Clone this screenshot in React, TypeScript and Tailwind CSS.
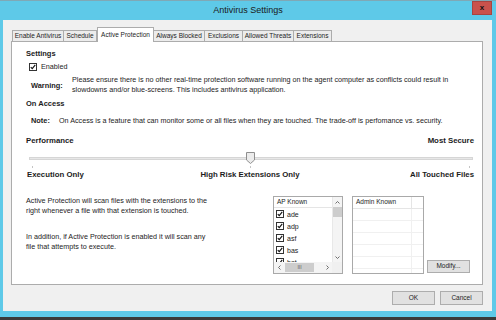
import React from "react";

const Check = () => (
  <span className="flex h-[8px] w-[8px] shrink-0 items-center justify-center border border-[#333] bg-white">
    <svg viewBox="0 0 8 8" className="h-[6px] w-[6px]">
      <path d="M1 4.2 L3 6.2 L7 1.2" fill="none" stroke="#111" strokeWidth="1.5" />
    </svg>
  </span>
);

const Chevron = ({ dir }: { dir: "up" | "down" | "left" | "right" }) => {
  const d = {
    up: "M1.5 4.5 L3.5 2.5 L5.5 4.5",
    down: "M1.5 2.5 L3.5 4.5 L5.5 2.5",
    left: "M4.5 1.5 L2.5 3.5 L4.5 5.5",
    right: "M2.5 1.5 L4.5 3.5 L2.5 5.5",
  }[dir];
  return (
    <svg viewBox="0 0 7 7" className="h-[7px] w-[7px]">
      <path d={d} fill="none" stroke="#606060" strokeWidth="0.9" />
    </svg>
  );
};

const tabs: [string, string][] = [
  ["Enable Antivirus", "w-[52px]"],
  ["Schedule", "w-[33px]"],
  ["Active Protection", "w-[57px]"],
  ["Always Blocked", "w-[51px]"],
  ["Exclusions", "w-[38px]"],
  ["Allowed Threats", "w-[51px]"],
  ["Extensions", "w-[38px]"],
];

const extensions = ["ade", "adp", "asf", "bas", "bat"];

export default function App() {
  return (
    <div className="flex h-[320px] w-[496px] flex-col overflow-hidden bg-[#5ec9e8] font-['Liberation_Sans',Arial,sans-serif] text-[#1c1c1c]">
      {/* top edge */}
      <div className="h-px bg-[#7fa8b6]" />

      {/* Title bar */}
      <div className="relative flex h-[19px] items-center justify-center">
        <span className="text-[9px] leading-none text-[#1a1a1a]">Antivirus Settings</span>
        <div className="absolute right-[4px] top-0 flex h-[14px] w-[20px] items-center justify-center border border-[#a94440] bg-[#c9524c]">
          <span className="text-[8px] font-bold leading-none text-[#111]">x</span>
        </div>
      </div>

      {/* Window body */}
      <div className="ml-[3px] mr-[4px] flex h-[291px] flex-col bg-[#f0f0f0]">
        {/* Tab strip */}
        <div className="flex items-end pl-[9px] pt-[7px]">
          {tabs.map(([label, w]) =>
            label === "Active Protection" ? (
              <div
                key={label}
                className={`relative z-10 -mb-px flex h-[15px] ${w} items-center justify-center border border-b-0 border-[#acacac] bg-white`}
              >
                <span className="text-[6.5px] leading-none">{label}</span>
              </div>
            ) : (
              <div
                key={label}
                className={`flex h-[11px] ${w} items-center justify-center border border-b-0 border-l-0 border-[#acacac] bg-[#ececec] first:border-l`}
              >
                <span className="text-[6.5px] leading-none">{label}</span>
              </div>
            )
          )}
        </div>

        {/* Panel */}
        <div className="ml-[8px] flex h-[244px] w-[472px] flex-col border border-[#acacac] bg-white pl-[14px] pr-[8px] pt-[7px] text-[7.2px] leading-[9px]">
          <div className="text-[7.5px] font-bold">Settings</div>

          <div className="ml-[3px] mt-[4px] flex items-center gap-[4px]">
            <Check />
            <span>Enabled</span>
          </div>

          <div className="ml-[5px] mt-[4px] flex items-center">
            <span className="w-[41px] text-[7.4px] font-bold">Warning:</span>
            <p className="leading-[10px]">
              Please ensure there is no other real-time protection software running on the agent computer as conflicts could result in
              <br />
              slowdowns and/or blue-screens. This includes antivirus application.
            </p>
          </div>

          <div className="mt-[4px] text-[7.5px] font-bold">On Access</div>

          <div className="ml-[5px] mt-[8px] flex">
            <span className="w-[28px] text-[7.4px] font-bold">Note:</span>
            <span>On Access is a feature that can monitor some or all files when they are touched. The trade-off is perfomance vs. security.</span>
          </div>

          <div className="mt-[11px] flex justify-between text-[7.8px] font-bold">
            <span>Performance</span>
            <span>Most Secure</span>
          </div>

          {/* Slider */}
          <div className="relative ml-[3px] mr-[1px] mt-[7px] h-[16px]">
            <div className="absolute left-0 right-0 top-[5px] h-[3px] border border-[#d6d6d6] bg-[#e7e7e7]" />
            <svg viewBox="0 0 9 12" className="absolute left-[217px] top-0 h-[12px] w-[9px]">
              <path d="M0.5 0.5 H8.5 V8 L4.5 11.5 L0.5 8 Z" fill="#ececec" stroke="#8f8f8f" strokeWidth="1" />
            </svg>
            <div className="absolute left-[3px] top-[14px] h-[2px] w-px bg-[#c4c4c4]" />
            <div className="absolute left-[221px] top-[14px] h-[2px] w-px bg-[#c4c4c4]" />
            <div className="absolute right-[3px] top-[14px] h-[2px] w-px bg-[#c4c4c4]" />
          </div>

          <div className="mt-[2px] grid grid-cols-3 text-[7.8px] font-bold">
            <span className="ml-px text-left">Execution Only</span>
            <span className="text-center">High Risk Extensions Only</span>
            <span className="text-right">All Touched Files</span>
          </div>

          {/* Extensions section */}
          <div className="mt-[17px] flex">
            <div className="w-[247px] leading-[10px]">
              <p>
                Active Protection will scan files with the extensions to the
                <br />
                right whenever a file with that extension is touched.
              </p>
              <p className="mt-[16px]">
                In addition, if Active Protection is enabled it will scan any
                <br />
                file that attempts to execute.
              </p>
            </div>

            {/* AP Known list */}
            <div className="flex h-[78px] w-[70px] flex-col border border-[#a9a9a9] text-[6.5px]">
              <div className="flex flex-1 overflow-hidden">
                <div className="flex flex-1 flex-col overflow-hidden">
                  <div className="flex h-[11px] shrink-0 items-center border-b border-[#e5e5e5] pl-[3px] leading-none">AP Known</div>
                  {extensions.map((ext) => (
                    <div key={ext} className="flex h-[12px] shrink-0 items-center gap-[3px] pl-[2px] leading-none">
                      <Check />
                      <span className="text-[7px]">{ext}</span>
                    </div>
                  ))}
                </div>
                <div className="flex w-[10px] flex-col border-l border-[#e8e8e8] bg-[#f4f4f4]">
                  <div className="flex h-[10px] items-center justify-center">
                    <Chevron dir="up" />
                  </div>
                  <div className="h-[10px] bg-[#cdcdcd]" />
                  <div className="flex-1" />
                  <div className="flex h-[9px] items-center justify-center">
                    <Chevron dir="down" />
                  </div>
                </div>
              </div>
              <div className="flex h-[11px] shrink-0 bg-[#f4f4f4]">
                <div className="flex w-[10px] items-center justify-center">
                  <Chevron dir="left" />
                </div>
                <div className="my-[1px] ml-[1px] flex w-[29px] items-center justify-center bg-[#cdcdcd]">
                  <span className="text-[5px] leading-none text-[#555]">III</span>
                </div>
                <div className="flex-1" />
                <div className="flex w-[10px] items-center justify-center">
                  <Chevron dir="right" />
                </div>
                <div className="w-[10px] bg-[#f0f0f0]" />
              </div>
            </div>

            {/* Admin Known list */}
            <div className="ml-[9px] flex h-[78px] w-[72px] flex-col border border-[#a9a9a9] text-[6.5px]">
              <div className="flex h-[12px] shrink-0 border-b border-[#e5e5e5]">
                <div className="flex w-[59px] items-center border-r border-[#e5e5e5] pl-[3px] leading-none">Admin Known</div>
              </div>
              {[0, 1, 2, 3, 4].map((i) => (
                <div key={i} className="flex h-[12px] shrink-0 border-b border-[#f0f0f0]">
                  <div className="w-[59px] border-r border-[#f0f0f0]" />
                </div>
              ))}
              <div className="flex flex-1">
                <div className="w-[59px] border-r border-[#f0f0f0]" />
              </div>
            </div>

            <div className="mb-[1px] ml-[3px] flex h-[13px] w-[43px] items-center justify-center self-end border border-[#adadad] bg-[#e1e1e1] text-[6.5px] leading-none">
              Modify...
            </div>
          </div>
        </div>

        {/* Dialog buttons */}
        <div className="mt-[6px] flex justify-end gap-[5px] pr-[9px]">
          <div className="flex h-[14px] w-[43px] items-center justify-center border border-[#adadad] bg-[#e1e1e1] text-[6.5px] leading-none">
            OK
          </div>
          <div className="flex h-[14px] w-[43px] items-center justify-center border border-[#adadad] bg-[#e1e1e1] text-[6.5px] leading-none">
            Cancel
          </div>
        </div>
      </div>

      <div className="flex-1" />
      <div className="h-[3px] bg-[#3a3a3a]" />
    </div>
  );
}
